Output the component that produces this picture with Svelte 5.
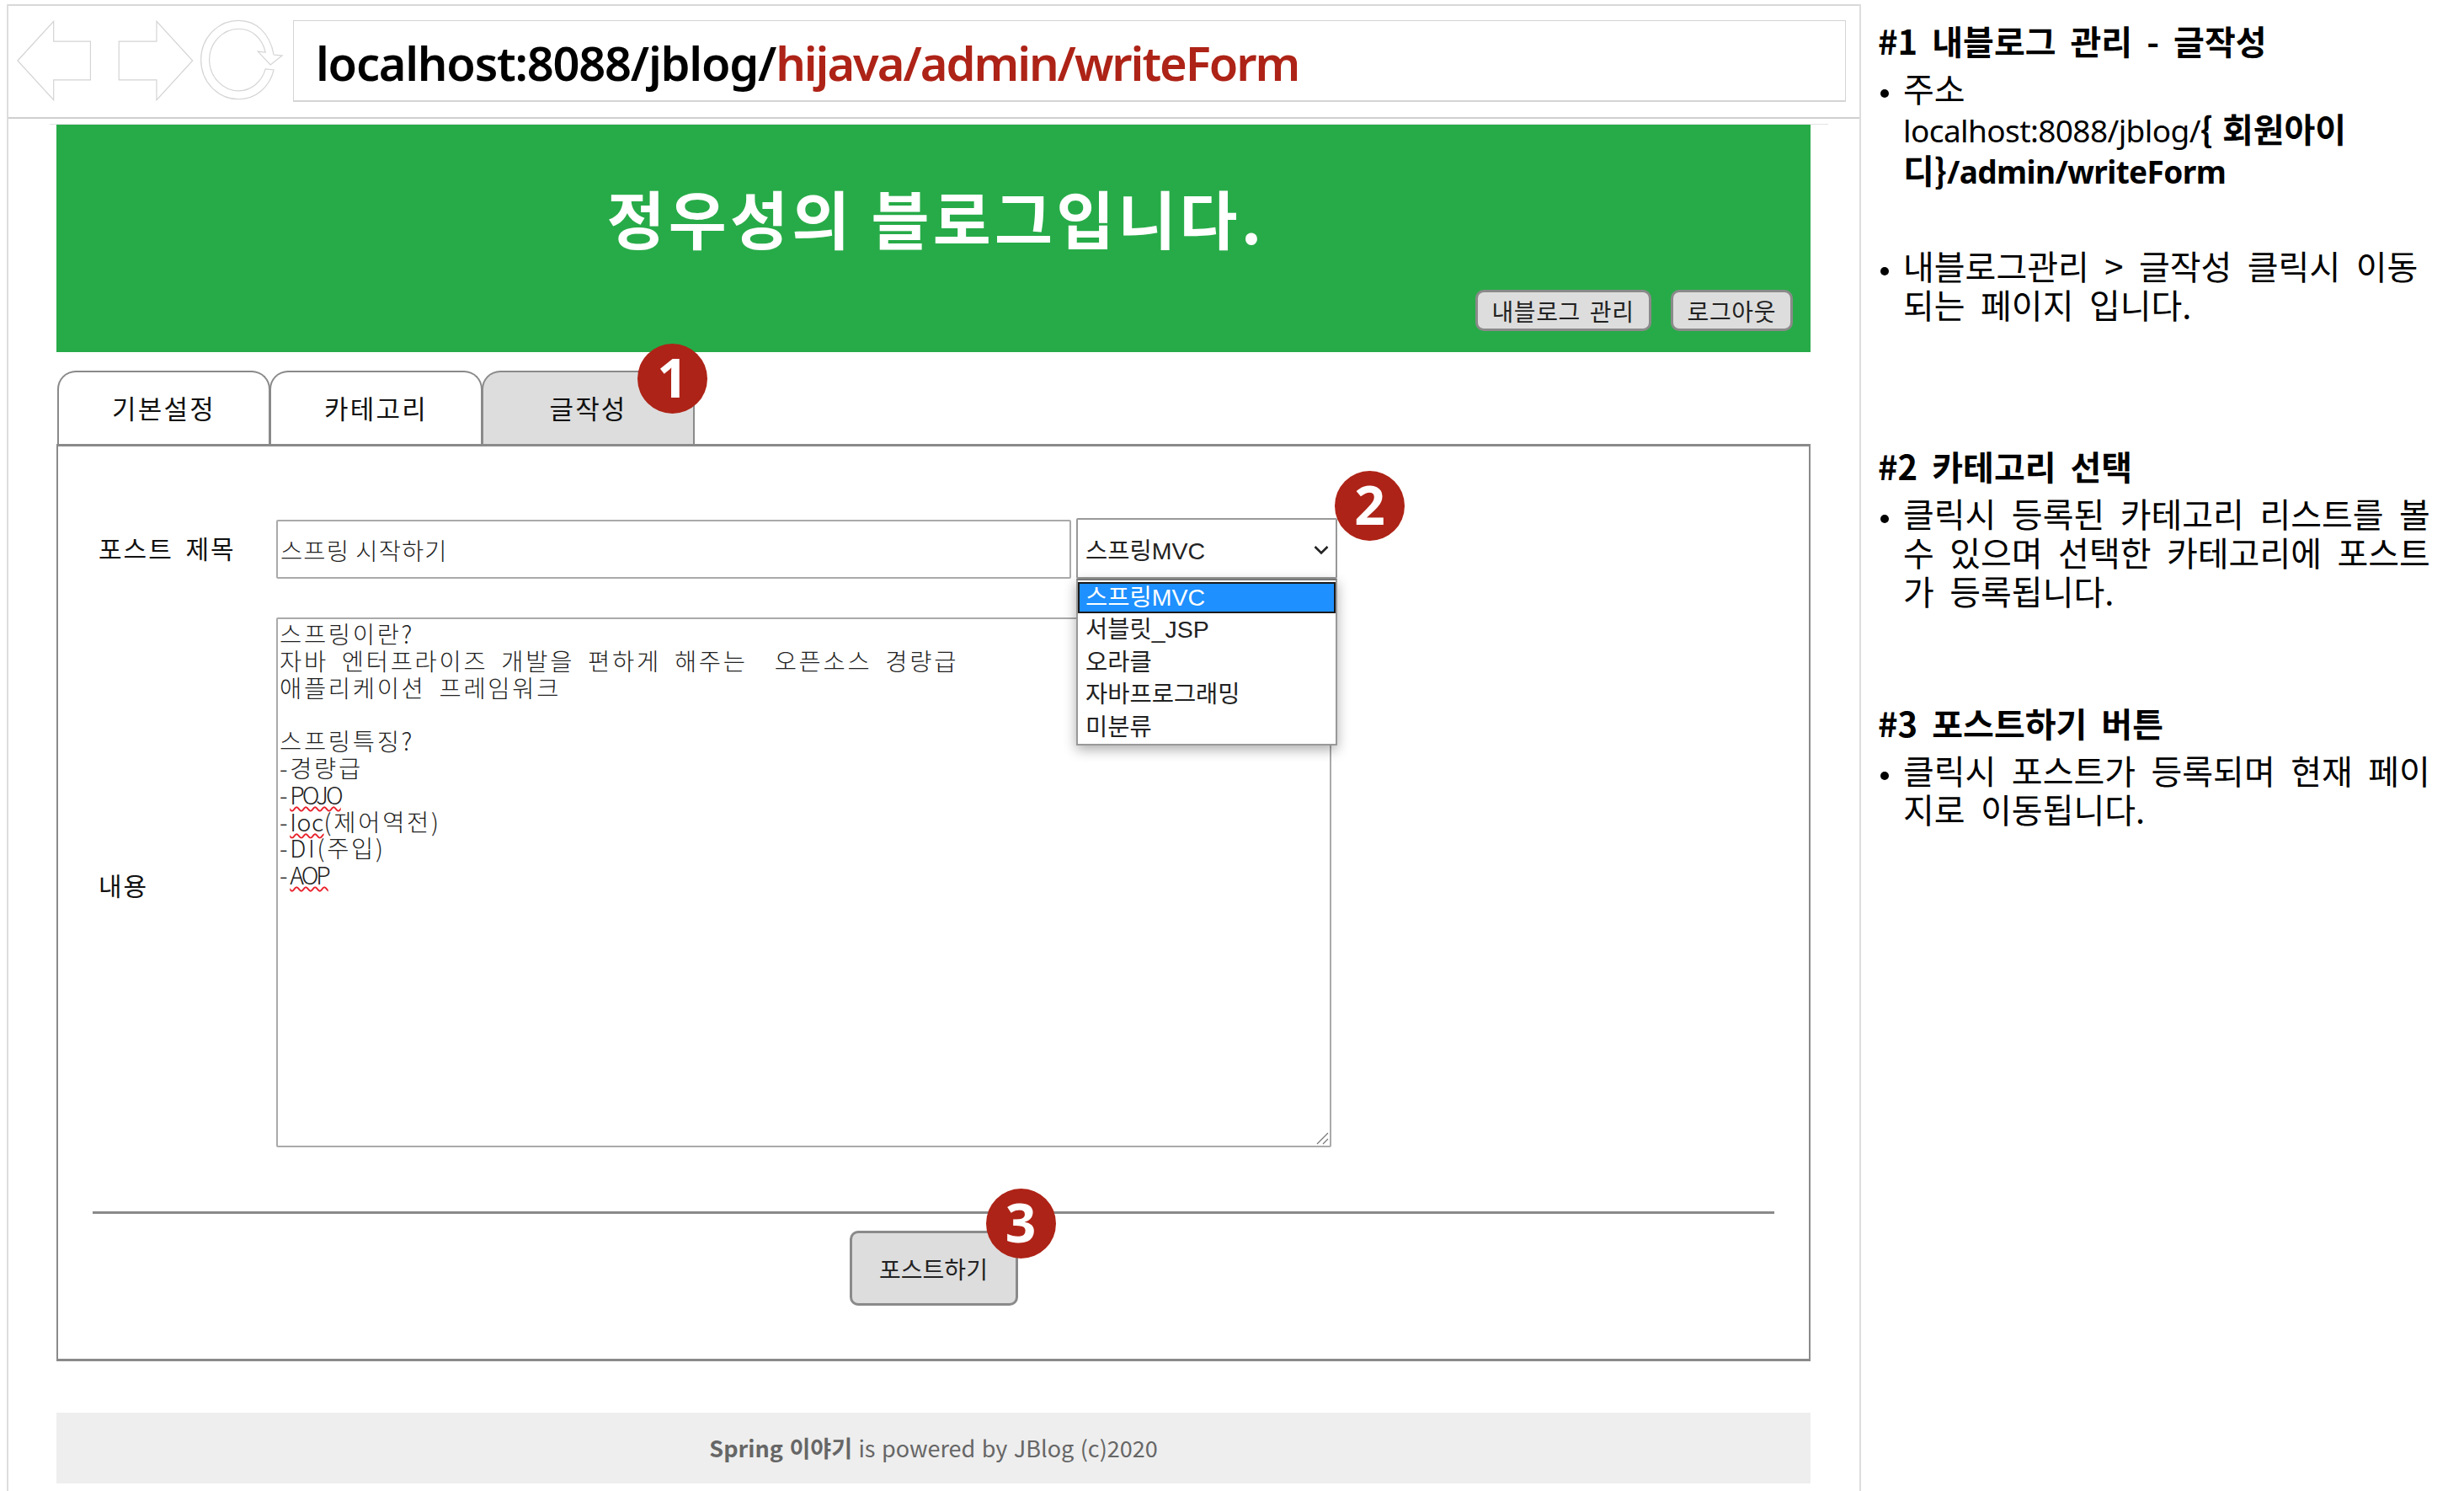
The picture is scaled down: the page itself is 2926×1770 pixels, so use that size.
<script>
  const tabs = [
    { label: '기본설정' },
    { label: '카테고리' },
    { label: '글작성', active: true }
  ];
  const categories = ['스프링MVC', '서블릿_JSP', '오라클', '자바프로그래밍', '미분류'];
</script>

<div class="page">
  <div class="frame">
    <!-- browser toolbar -->
    <div class="toolbar">
      <svg class="nav" width="340" height="136" viewBox="0 0 340 136">
        <g fill="#fff" stroke="#d4d4d4" stroke-width="1.2" transform="translate(-10 -5)">
          <polygon points="21,72 64,25 64,49 108,49 108,95 64,95 64,119" />
          <polygon points="142,49 187,49 187,25 230,72 187,119 187,95 142,95" />
          <path d="M327 65 C322 38 305 24 285 24 C260 24 240 45 240 71 C240 97 260 118 285 118 C305 118 322 104 327 83 L317 82 C313 97 300 108 285 108 C266 108 250 91 250 71 C250 51 266 34 285 34 C300 34 313 44 317 62 L308 61 L323 77 L337 66 Z" />
        </g>
      </svg>
      <div class="address">localhost:8088/jblog/<span class="red">hijava/admin/writeForm</span></div>
    </div>
    <div class="rule"></div>

    <div class="content">
      <header class="blog-head">
        <h1>정우성의 블로그입니다.</h1>
        <div class="head-actions">
          <button class="btn">내블로그 관리</button>
          <button class="btn">로그아웃</button>
        </div>
      </header>

      <div class="tabs">
        {#each tabs as tab}
          <div class="tab" class:active={tab.active}>
            {tab.label}
            {#if tab.active}<span class="badge badge-tab">1</span>{/if}
          </div>
        {/each}
      </div>

      <div class="box">
        <div class="fields">
          <div class="label label-title">포스트 제목</div>
          <div class="title-row">
            <input class="title-input" type="text" value="스프링 시작하기" />
            <div class="select-wrap">
              <select class="category">
                {#each categories as c}
                  <option>{c}</option>
                {/each}
              </select>
              <svg class="chevron" width="18" height="12" viewBox="0 0 18 12">
                <path d="M1.5 2 L9 9.5 L16.5 2" fill="none" stroke="#222" stroke-width="2.6" />
              </svg>
              <span class="badge badge-select">2</span>
              <ul class="dropdown">
                {#each categories as c, i}
                  <li class:selected={i === 0}>{c}</li>
                {/each}
              </ul>
            </div>
          </div>

          <div class="label label-body">내용</div>
          <div class="editor">
            <p>스프링이란?</p>
            <p>자바 엔터프라이즈 개발을 편하게 해주는  오픈소스 경량급</p>
            <p>애플리케이션 프레임워크</p>
            <p>&nbsp;</p>
            <p>스프링특징?</p>
            <p>-경량급</p>
            <p>-<u class="caps">POJO</u></p>
            <p>-<u>Ioc</u>(제어역전)</p>
            <p>-DI(주입)</p>
            <p>-<u class="caps">AOP</u></p>
            <svg class="grip" width="16" height="16" viewBox="0 0 16 16">
              <path d="M2 15 L15 2 M9 15 L15 9" stroke="#777" stroke-width="1.2" />
            </svg>
          </div>
        </div>

        <div class="divider"></div>
        <div class="submit-row">
          <button class="btn submit">
            포스트하기
            <span class="badge badge-submit">3</span>
          </button>
        </div>
      </div>

      <footer class="foot"><b>Spring 이야기</b> is powered by JBlog (c)2020</footer>
    </div>
  </div>

  <!-- description panel -->
  <aside class="notes">
    <h2>#1 내블로그 관리 - 글작성</h2>
    <ul>
      <li>주소<br /><span class="url">localhost:8088/jblog/</span><b class="brace">{'{'}</b><b class="id">회원아이<br />디{'}'}</b><b class="url">/admin/writeForm</b></li>
      <li class="spaced">내블로그관리 &gt; 글작성 클릭시 이동<br />되는 페이지 입니다.</li>
    </ul>

    <h2 class="second">#2 카테고리 선택</h2>
    <ul>
      <li>클릭시 등록된 카테고리 리스트를 볼<br />수 있으며 선택한 카테고리에 포스트<br />가 등록됩니다.</li>
    </ul>

    <h2 class="third">#3 포스트하기 버튼</h2>
    <ul>
      <li>클릭시 포스트가 등록되며 현재 페이<br />지로 이동됩니다.</li>
    </ul>
  </aside>
</div>

<style>
  :global(body) {
    margin: 0;
    background: #fff;
  }

  .page {
    display: flex;
    width: 2926px;
    height: 1770px;
    overflow: hidden;
    font-family: "Liberation Sans", "Noto Sans CJK KR", sans-serif;
    color: #111;
  }

  .frame {
    margin-left: 8px;
    margin-top: 5px;
    width: 2202px;
    box-sizing: border-box;
    border-left: 2px solid #ddd;
    border-right: 2px solid #ddd;
  }

  .toolbar {
    display: flex;
    align-items: flex-start;
    height: 136px;
    box-sizing: border-box;
    border-top: 2px solid #d8d8d8;
    border-bottom: 2px solid #cfcfcf;
  }

  .nav {
    flex: none;
    width: 338px;
    margin-top: -2px;
  }

  .address {
    width: 1844px;
    height: 97px;
    margin-top: 17px;
    box-sizing: border-box;
    border: 1.5px solid #d4d4d4;
    border-bottom-width: 2.5px;
    padding: 4px 0 0 26px;
    font-family: "Noto Sans", sans-serif;
    font-weight: 600;
    font-size: 56px;
    letter-spacing: -1.25px;
    line-height: 90px;
    color: #000;
    white-space: nowrap;
  }

  .red {
    color: #ae2317;
    letter-spacing: -2.05px;
  }

  .rule {
    height: 1px;
    width: 2112px;
    margin: 6px 0 0 49px;
    background: #e4e4e4;
  }

  .content {
    width: 2083px;
    margin-left: 57px;
  }

  .blog-head {
    display: flex;
    flex-direction: column;
    height: 270px;
    box-sizing: border-box;
    padding: 65px 21px 25px;
    background: #27ab48;
  }

  .blog-head h1 {
    margin: 0;
    padding-left: 6px;
    font-family: "Noto Sans CJK KR", sans-serif;
    font-weight: 700;
    font-size: 75px;
    letter-spacing: 4.2px;
    line-height: 90px;
    text-align: center;
    color: #fff;
  }

  .head-actions {
    display: flex;
    justify-content: flex-end;
    gap: 23px;
    margin-top: auto;
  }

  .btn {
    height: 49px;
    padding: 0 17px;
    border: 3px solid #8a8a8a;
    border-radius: 10px;
    background: #ddd;
    font-family: "Noto Sans CJK KR", sans-serif;
    font-size: 28px;
    letter-spacing: 0.6px;
    word-spacing: 4px;
    line-height: 1;
    color: #222;
  }

  .tabs {
    display: flex;
    margin-top: 22px;
    margin-left: 1px;
  }

  .tab {
    position: relative;
    width: 253px;
    height: 87px;
    box-sizing: border-box;
    border: 2px solid #8a8a8a;
    border-bottom: none;
    border-radius: 22px 22px 0 0;
    margin-right: -1px;
    font-family: "Noto Sans CJK KR", sans-serif;
    font-size: 31px;
    letter-spacing: 2.2px;
    line-height: 84px;
    text-align: center;
    color: #111;
  }

  .tab.active {
    background: #ddd;
  }

  .badge {
    position: absolute;
    width: 83px;
    height: 83px;
    border-radius: 50%;
    background: #ae2317;
    font-family: "Noto Sans", sans-serif;
    font-weight: 700;
    font-size: 64px;
    letter-spacing: 0;
    line-height: 80px;
    text-align: center;
    color: #fff;
  }

  .badge-tab {
    top: -34px;
    left: 183px;
  }

  .badge-select {
    top: -56px;
    left: 307px;
  }

  .badge-submit {
    top: -53px;
    left: 159px;
  }

  .box {
    height: 1089px;
    box-sizing: border-box;
    border: 2px solid #8a8a8a;
    border-top-width: 3px;
    border-bottom-width: 3px;
    padding: 85px 41px 0;
  }

  .fields {
    display: grid;
    grid-template-columns: 218px 1fr;
    grid-template-rows: 72px 629px;
    row-gap: 46px;
    align-items: center;
  }

  .label {
    padding-left: 7px;
    font-family: "Noto Sans CJK KR", sans-serif;
    font-size: 30px;
    letter-spacing: 2px;
    word-spacing: 6px;
  }

  .label-title {
    padding-bottom: 2px;
  }

  .label-body {
    padding-top: 5px;
  }

  .title-row {
    display: flex;
    gap: 6px;
  }

  .title-input {
    width: 944px;
    height: 70px;
    margin-top: 2px;
    box-sizing: border-box;
    border: 2px solid #aaa;
    border-radius: 2px;
    padding: 0 3px;
    font-family: "Noto Sans CJK KR", sans-serif;
    font-weight: 300;
    font-size: 28.5px;
    letter-spacing: 1.1px;
    color: #222;
    outline: none;
  }

  .select-wrap {
    position: relative;
    width: 310px;
    height: 72px;
  }

  .category {
    appearance: none;
    width: 100%;
    height: 100%;
    box-sizing: border-box;
    border: 2px solid #999;
    border-radius: 2px;
    padding: 6px 0 0 9px;
    background: #fff;
    font-family: "Liberation Sans", "Noto Sans CJK KR", sans-serif;
    font-size: 28.5px;
    color: #222;
  }

  .chevron {
    position: absolute;
    top: 32px;
    right: 10px;
  }

  .dropdown {
    position: absolute;
    z-index: 2;
    top: 72px;
    left: 0;
    width: 310px;
    height: 198px;
    box-sizing: border-box;
    margin: 0;
    padding: 2px 0 0;
    list-style: none;
    border: 2px solid #999;
    border-top-color: #777;
    background: #fff;
    box-shadow: 0 5px 14px rgba(0, 0, 0, 0.32);
    font-size: 28.5px;
    line-height: 39px;
    color: #222;
  }

  .dropdown li {
    height: 38.7px;
    padding-left: 9px;
  }

  .dropdown li.selected {
    height: 37px;
    box-sizing: border-box;
    padding-left: 7px;
    background: #1e90ff;
    border: 2.5px solid #1a1a1a;
    color: #fff;
    line-height: 33px;
  }

  .editor {
    position: relative;
    align-self: stretch;
    width: 1253px;
    box-sizing: border-box;
    border: 2px solid #aaa;
    border-radius: 2px;
    padding: 1px 2px 0;
    font-family: "Noto Sans CJK KR", sans-serif;
    font-weight: 300;
    font-size: 28.5px;
    letter-spacing: 2.7px;
    word-spacing: 7px;
    line-height: 31.8px;
    color: #222;
  }

  .editor p {
    margin: 0;
    white-space: pre;
  }

  .editor u {
    text-decoration: underline wavy #e8202a 2px;
    text-underline-offset: 2px;
    letter-spacing: 0.5px;
  }

  .editor u.caps {
    letter-spacing: -3px;
  }

  .grip {
    position: absolute;
    right: 1px;
    bottom: 1px;
  }

  .divider {
    height: 3px;
    margin-top: 76px;
    background: #8a8a8a;
  }

  .submit-row {
    display: flex;
    justify-content: center;
    margin-top: 20px;
  }

  .submit {
    position: relative;
    width: 200px;
    height: 89px;
    padding: 0;
    letter-spacing: 0;
    color: #222;
  }

  .foot {
    height: 84px;
    margin-top: 61px;
    background: #eee;
    font-family: "Noto Sans CJK KR", sans-serif;
    font-size: 27px;
    line-height: 84px;
    word-spacing: 1.4px;
    text-align: center;
    color: #666;
  }

  .notes {
    flex: none;
    width: 716px;
    box-sizing: border-box;
    padding: 25px 0 0 20px;
    font-family: "Noto Sans CJK KR", sans-serif;
    font-size: 40px;
    line-height: 46px;
    word-spacing: 9.5px;
    color: #000;
  }

  .notes h2 {
    margin: 0;
    font-size: 40px;
    font-weight: 700;
    line-height: 46px;
    word-spacing: 8px;
  }

  .notes h2.second {
    margin-top: 146px;
  }

  .notes h2.third {
    margin-top: 111px;
  }

  .notes ul {
    margin: 10px 0 0;
    padding-left: 30px;
    list-style: disc;
  }

  .notes li::marker {
    font-size: 26px;
  }

  .notes li.spaced {
    margin-top: 67px;
  }

  .url {
    font-family: "Noto Sans", "Noto Sans CJK KR", sans-serif;
    font-size: 37px;
    letter-spacing: -0.6px;
    word-spacing: 0;
    position: relative;
    top: 1.5px;
  }

  .brace {
    letter-spacing: 11px;
    position: relative;
    top: 1.5px;
  }

  .id {
    position: relative;
    top: 1.5px;
  }
</style>
